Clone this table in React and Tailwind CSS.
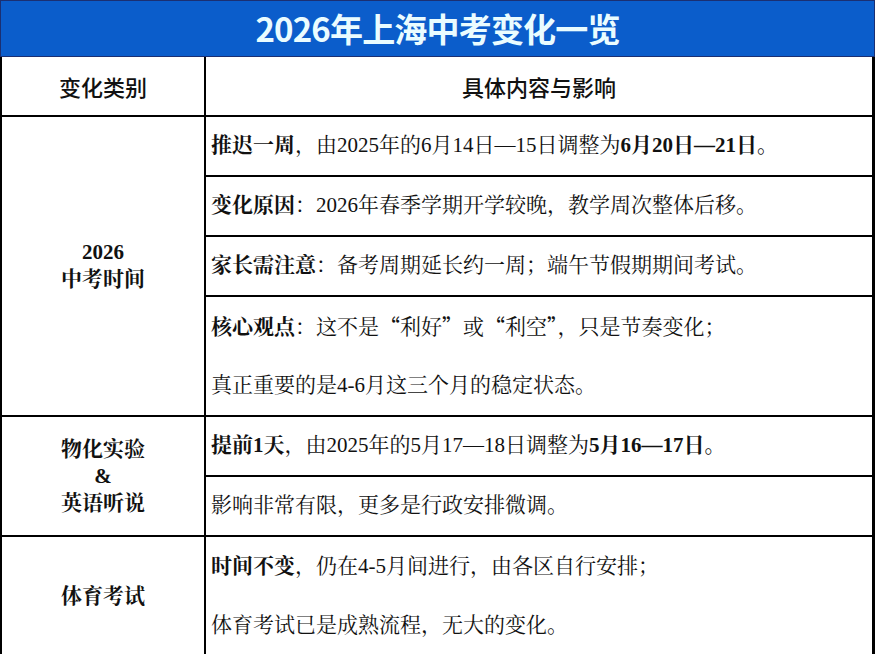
const serif = {
  fontFamily:
    '"Liberation Serif", "Noto Serif CJK SC", "Noto Sans CJK SC", serif',
};

// full width quotes, as in the Song-style original
const Q = ({ children }) => (
  <span style={{ fontFamily: '"Noto Sans CJK SC", sans-serif' }}>{children}</span>
);

const sections = [
  {
    label: ['2026', '中考时间'],
    rows: [
      [
        [
          <b key="a">推迟一周</b>,
          '，由2025年的6月14日—15日调整为',
          <b key="b">6月20日—21日。</b>,
        ],
      ],
      [[<b key="a">变化原因</b>, '：2026年春季学期开学较晚，教学周次整体后移。']],
      [[<b key="a">家长需注意</b>, '：备考周期延长约一周；端午节假期期间考试。']],
      [
        [
          <b key="a">核心观点</b>,
          '：这不是',
          <Q key="b">“</Q>,
          '利好',
          <Q key="c">”</Q>,
          '或',
          <Q key="d">“</Q>,
          '利空',
          <Q key="e">”</Q>,
          '，只是节奏变化；',
        ],
        ['真正重要的是4-6月这三个月的稳定状态。'],
      ],
    ],
  },
  {
    label: ['物化实验', '&', '英语听说'],
    rows: [
      [
        [
          <b key="a">提前1天</b>,
          '，由2025年的5月17—18日调整为',
          <b key="b">5月16—17日。</b>,
        ],
      ],
      [['影响非常有限，更多是行政安排微调。']],
    ],
  },
  {
    label: ['体育考试'],
    rows: [
      [
        [<b key="a">时间不变</b>, '，仍在4-5月间进行，由各区自行安排；'],
        ['体育考试已是成熟流程，无大的变化。'],
      ],
    ],
  },
];

function Section({ label, rows }) {
  return (
    <div className="flex border-b-2 border-black">
      <div className="w-[204px] shrink-0 border-r-2 border-black flex flex-col items-center justify-center font-bold text-[21px] leading-[27px] text-[#111]">
        {label.map((l, i) => (
          <div key={i}>{l}</div>
        ))}
      </div>
      <div className="flex-1 flex flex-col">
        {rows.map((lines, i) => (
          <div
            key={i}
            className={i < rows.length - 1 ? 'border-b-2 border-black' : ''}
          >
            {lines.map((line, j) => (
              <div
                key={j}
                className={
                  'flex items-center pl-[5px] text-[21px] text-[#111] whitespace-nowrap ' +
                  (lines.length > 1 ? 'h-[59px]' : 'h-[58px]')
                }
              >
                <span>{line}</span>
              </div>
            ))}
          </div>
        ))}
      </div>
    </div>
  );
}

export default function App() {
  return (
    <div
      className="w-[875px] h-[654px] overflow-hidden bg-white"
      style={{ fontFamily: '"Noto Sans CJK SC", "Liberation Sans", sans-serif' }}
    >
      <div className="h-[57px] bg-[#0b5dcb] border border-[#1b2f72] flex items-center justify-center">
        <h1 className="text-[33px] font-bold text-[#eafcff] tracking-tight">
          2026年上海中考变化一览
        </h1>
      </div>
      <div className="border-l-2 border-r-[3px] border-black">
        <div className="flex h-[60px] border-b-2 border-black text-[22px] font-medium text-[#111]">
          <div className="w-[204px] shrink-0 border-r-2 border-black flex items-center justify-center">
            变化类别
          </div>
          <div className="flex-1 flex items-center justify-center">
            具体内容与影响
          </div>
        </div>
        <div style={serif}>
          {sections.map((s, i) => (
            <Section key={i} {...s} />
          ))}
        </div>
      </div>
    </div>
  );
}
